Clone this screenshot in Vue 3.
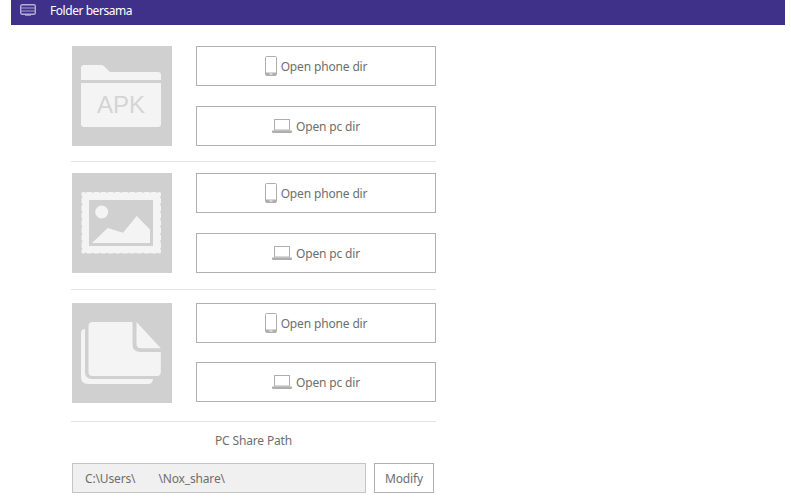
<script setup>
const groups = [
  { kind: 'apk', cls: 'g1' },
  { kind: 'pic', cls: 'g2' },
  { kind: 'doc', cls: 'g3' },
]
const topDots = Array.from({ length: 11 }, (_, i) => 13.5 + i * 7.2)
const sideDots = Array.from({ length: 8 }, (_, i) => 24 + i * 7.4)
</script>

<template>
  <div class="page">
    <header class="bar">
      <svg class="bar-icon" width="16" height="12" viewBox="0 0 16 12">
        <rect x="0.700" y="0.700" width="14.600" height="9.600" rx="1.500" fill="#3f3189" stroke="#b4afd6" stroke-width="1.400" />
        <path d="M1 4h14M1 7h14" stroke="#a9a3cf" stroke-width="1" />
        <path d="M5 11.500h6" stroke="#8f88bf" stroke-width="1" />
      </svg>
      <span class="bar-title">Folder bersama</span>
    </header>

    <main class="content">
      <section v-for="g in groups" :key="g.kind" class="group" :class="g.cls">
        <div class="tile">
          <svg v-if="g.kind === 'apk'" width="100" height="100" viewBox="0 0 100 100">
            <path d="M9 34V22q0-3 3-3h17q2 0 3.500 1.500L38 26h48q3 0 3 3v5z" fill="#f4f4f4" />
            <path d="M9 37h80v41q0 3-3 3H12q-3 0-3-3z" fill="#f4f4f4" />
            <text x="49" y="67" text-anchor="middle" class="apk">APK</text>
          </svg>
          <svg v-else-if="g.kind === 'pic'" width="100" height="100" viewBox="0 0 100 100">
            <rect x="9.500" y="19" width="79.500" height="61.500" rx="1.500" fill="#f4f4f4" />
            <g fill="#d0d0d0">
              <circle v-for="x in topDots" :key="'t' + x" :cx="x" cy="18.500" r="1.300" />
              <circle v-for="x in topDots" :key="'b' + x" :cx="x" cy="81" r="1.300" />
              <circle v-for="y in sideDots" :key="'l' + y" cx="9" :cy="y" r="1.300" />
              <circle v-for="y in sideDots" :key="'r' + y" cx="89.500" :cy="y" r="1.300" />
            </g>
            <rect x="17" y="27" width="64" height="46" fill="#d0d0d0" />
            <circle cx="29.700" cy="39" r="6.500" fill="#f4f4f4" />
            <path d="M20 70 35.700 55l15.300 4.700L64.700 43 78 56.500V70z" fill="#f4f4f4" />
          </svg>
          <svg v-else width="100" height="100" viewBox="0 0 100 100">
            <path d="M13 26q-4 0-4 4v44q0 7 7 7h60q5 0 5-5H20q-7 0-7-7z" fill="#f4f4f4" />
            <path d="M16.500 23q0-4 4-4H60.500v22q0 8 8 8h20.300v20q0 4-4 4H20.500q-4 0-4-4z" fill="#f4f4f4" />
            <path d="M64.500 19 88.800 45.300H69q-4.500 0-4.500-4.500z" fill="#f4f4f4" />
          </svg>
        </div>
        <div class="actions">
          <button class="btn">
            <svg width="12" height="20" viewBox="0 0 12 20">
              <rect x="0.500" y="0.500" width="11" height="19" rx="1" fill="none" stroke="#aeaeae" />
              <path d="M1 16.500h10V19.500H1z" fill="#aeaeae" />
              <path d="M4.500 18h3" stroke="#fff" stroke-width="1" />
            </svg>
            <span>Open phone dir</span>
          </button>
          <button class="btn">
            <svg width="20" height="14" viewBox="0 0 20 14">
              <rect x="2.500" y="0.500" width="15" height="10.500" fill="none" stroke="#aeaeae" />
              <path d="M0 11.500h20v1.500q0 1-1 1H1q-1 0-1-1z" fill="#aeaeae" />
            </svg>
            <span>Open pc dir</span>
          </button>
        </div>
      </section>

      <h2 class="path-title">PC Share Path</h2>
      <div class="path-row">
        <div class="path-field">C:\Users\<span class="gap"></span>\Nox_share\</div>
        <button class="modify">Modify</button>
      </div>
    </main>
  </div>
</template>

<style>
html, body { margin: 0; background: #fff; }
</style>

<style scoped>
.page {
  width: 791px;
  height: 500px;
  overflow: hidden;
  padding: 0 6px 0 11px;
  box-sizing: border-box;
  font-family: "Noto Sans", sans-serif;
  font-size: 12px;
  letter-spacing: -0.15px;
  color: #6e6e6e;
}
.bar {
  height: 25px;
  background: #3f3189;
  display: flex;
  align-items: center;
  padding-left: 9px;
  color: #fff;
}
.bar-icon { margin-top: -5px; }
.bar-title { margin-left: 14px; margin-top: -4px; letter-spacing: -0.45px; }
.content {
  width: 365px;
  margin-left: 60px;
  padding-top: 21px;
}
.group {
  display: flex;
  gap: 24px;
  padding-left: 1px;
  border-bottom: 1px solid #e2e2e2;
}
.g1 { padding-bottom: 15px; margin-bottom: 11px; }
.g2 { padding-bottom: 16px; margin-bottom: 13px; }
.g3 { padding-bottom: 18px; }
.tile {
  width: 100px;
  height: 100px;
  background: #d0d0d0;
  flex: none;
}
.tile svg { display: block; }
.apk {
  font-family: "Liberation Sans", sans-serif;
  font-size: 24px;
  letter-spacing: 0;
  fill: #d4d4d4;
}
.actions {
  width: 240px;
  display: flex;
  flex-direction: column;
  justify-content: space-between;
}
.g3 .actions { height: 99px; }
.btn {
  height: 40px;
  box-sizing: border-box;
  border: 1px solid #b0b0b0;
  background: #fff;
  display: flex;
  align-items: center;
  justify-content: center;
  gap: 4px;
  padding: 0;
  font: inherit;
  letter-spacing: inherit;
  color: inherit;
}
.path-title {
  margin: 10px 0 0;
  height: 31px;
  font: inherit;
  line-height: 17px;
  text-align: center;
}
.path-row {
  display: flex;
  gap: 8px;
  padding-left: 1px;
}
.path-field {
  width: 294px;
  height: 30px;
  box-sizing: border-box;
  background: #f0f0f0;
  border: 1px solid #c4c4c4;
  padding-left: 12px;
  line-height: 29px;
}
.gap { display: inline-block; width: 23px; }
.modify {
  width: 60px;
  height: 30px;
  border: 1px solid #b0b0b0;
  background: #fff;
  padding: 0;
  font: inherit;
  letter-spacing: inherit;
  color: inherit;
}
</style>
